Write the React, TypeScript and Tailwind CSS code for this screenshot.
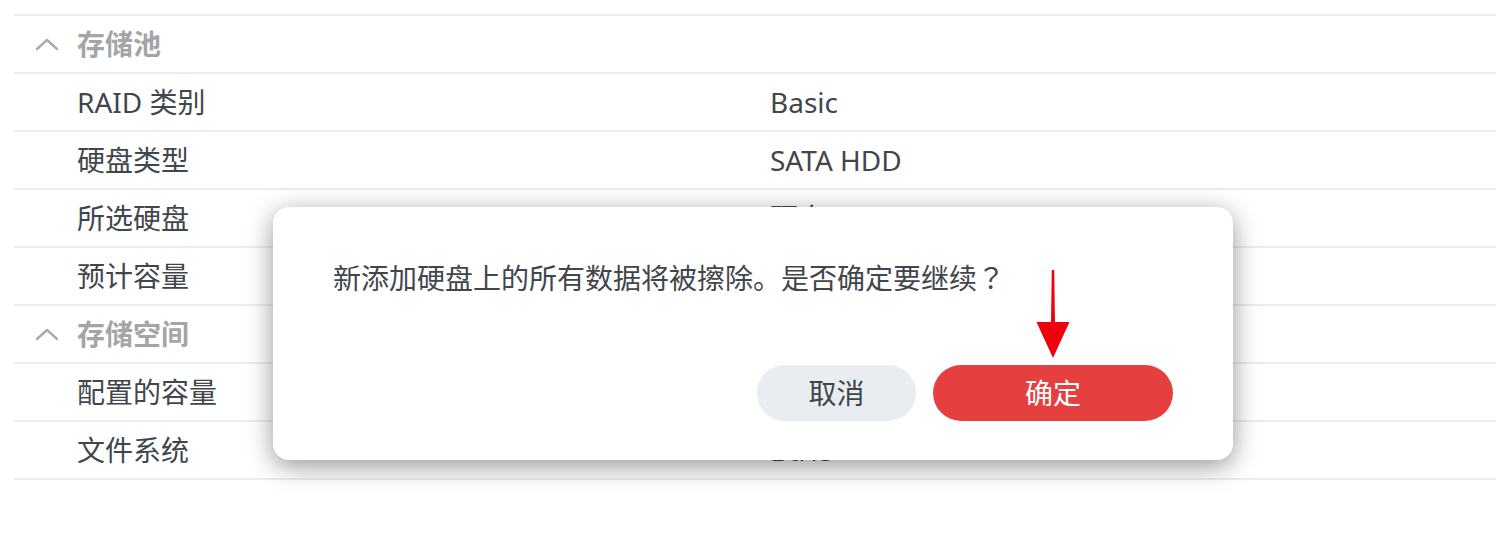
import React from "react";

type Row = { label: string; value?: string; section?: boolean };

const rows: Row[] = [
  { label: "存储池", section: true },
  { label: "RAID 类别", value: "Basic" },
  { label: "硬盘类型", value: "SATA HDD" },
  { label: "所选硬盘", value: "硬盘 1" },
  { label: "预计容量", value: "3.6 TB" },
  { label: "存储空间", section: true },
  { label: "配置的容量", value: "3.5 TB" },
  { label: "文件系统", value: "Btrfs" },
];

function Chevron() {
  return (
    <svg viewBox="0 0 24 14" className="h-[14px] w-[24px]" fill="none">
      <polyline
        points="2,12 12,3 22,12"
        stroke="#a9abad"
        strokeWidth="2.4"
        strokeLinecap="round"
        strokeLinejoin="round"
      />
    </svg>
  );
}

function ConfirmDialog() {
  return (
    <div className="absolute left-[273px] top-[207px] h-[253px] w-[960px] rounded-[16px] bg-white px-[60px] pt-[52px] shadow-[0_6px_26px_rgba(0,0,0,0.42)]">
      <p className="text-[28px] leading-[36px] text-[#41464b]">
        新添加硬盘上的所有数据将被擦除。是否确定要继续
        <span style={{ fontFamily: '"Noto Sans CJK JP", sans-serif' }}>？</span>
      </p>
      <div className="mt-[69px] flex justify-end gap-[17px]">
        <button
          type="button"
          className="h-[56px] w-[159px] rounded-full bg-[#e9edf1] text-[28px] text-[#41464b]"
        >
          取消
        </button>
        <button
          type="button"
          className="h-[56px] w-[240px] rounded-full bg-[#e5403f] text-[28px] text-white"
        >
          确定
        </button>
      </div>
      <svg
        viewBox="0 0 34 88"
        className="absolute left-[763px] top-[63px] h-[88px] w-[34px]"
      >
        <path d="M15.8 0 L18.2 0 L19 54 L17 54 L15 54 Z" fill="#f0000f" />
        <path d="M0.5 52 L33.5 52 L17 88 Z" fill="#f0000f" />
      </svg>
    </div>
  );
}

export default function App() {
  return (
    <div
      className="relative h-[536px] w-[1510px] bg-white"
      style={{ fontFamily: '"Noto Sans", "Noto Sans CJK SC", sans-serif' }}
    >
      <div className="mx-[14px] pt-[14px]">
        <div className="border-t-2 border-[#ececec]">
          {rows.map((row) => (
            <div
              key={row.label}
              className="flex h-[58px] items-center border-b-2 border-[#ececec]"
            >
              {row.section ? (
                <>
                  <div className="flex w-[63px] justify-center pl-[2px]">
                    <Chevron />
                  </div>
                  <span className="text-[28px] font-bold text-[#a3a5a7]">
                    {row.label}
                  </span>
                </>
              ) : (
                <>
                  <span className="w-[756px] shrink-0 pl-[63px] text-[28px] text-[#41464b]">
                    {row.label}
                  </span>
                  <span className="text-[28px] text-[#41464b]">{row.value}</span>
                </>
              )}
            </div>
          ))}
        </div>
      </div>
      <ConfirmDialog />
    </div>
  );
}
